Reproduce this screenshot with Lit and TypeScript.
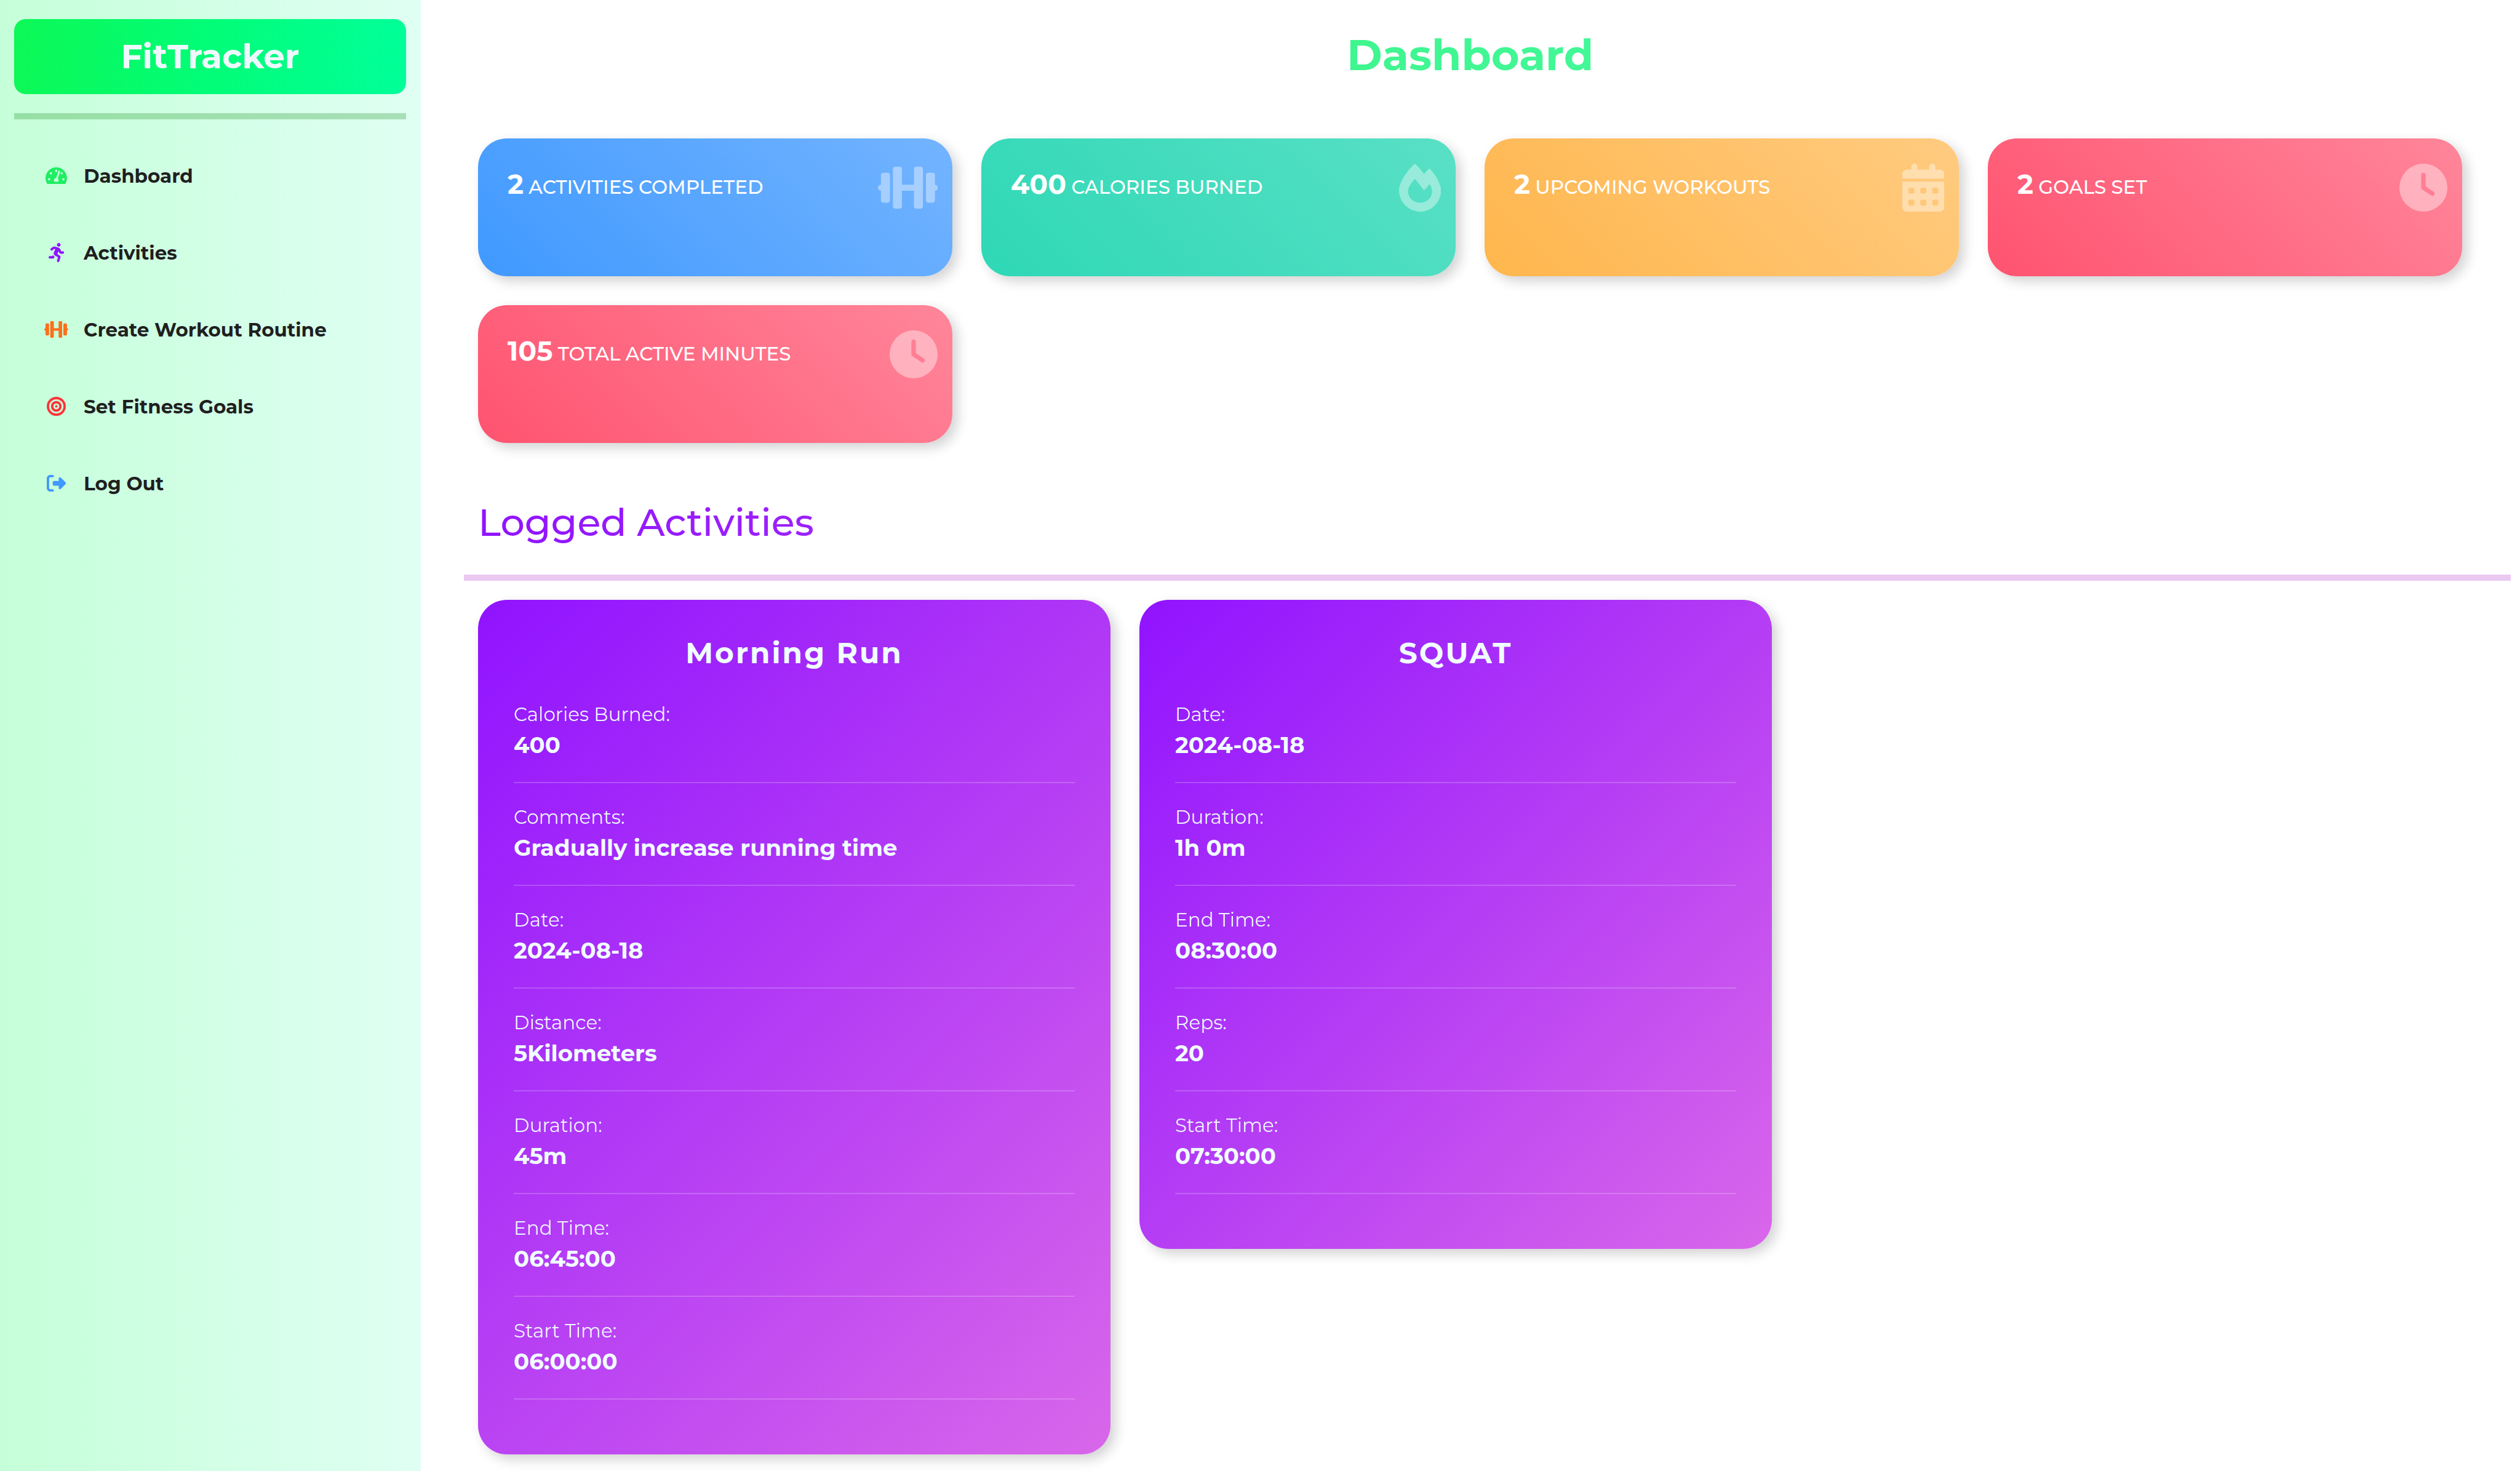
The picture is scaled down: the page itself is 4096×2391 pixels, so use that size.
import { LitElement, html, css, svg } from "lit";
import { customElement, property } from "lit/decorators.js";

interface IconShape {
  width: number;
  d: string;
}

const ICONS: Record<string, IconShape> = {
  gauge: {
    width: 576,
    d: "M288 32C128.94 32 0 160.94 0 320c0 52.8 14.25 102.26 39.06 144.8 5.61 9.62 16.3 15.2 27.44 15.2h443c11.14 0 21.83-5.58 27.44-15.2C561.75 422.26 576 372.8 576 320c0-159.06-128.94-288-288-288zm0 64c14.71 0 26.58 10.13 30.32 23.65-1.11 2.26-2.64 4.23-3.45 6.67l-9.22 27.67c-5.13 3.49-10.97 6.01-17.64 6.01-17.67 0-32-14.33-32-32S270.33 96 288 96zM96 384c-17.67 0-32-14.33-32-32s14.33-32 32-32 32 14.33 32 32-14.33 32-32 32zm48-160c-17.67 0-32-14.33-32-32s14.33-32 32-32 32 14.33 32 32-14.33 32-32 32zm246.77-72.41l-61.33 184C343.13 347.33 352 364.54 352 384c0 11.72-3.38 22.55-8.88 32H232.88c-5.5-9.45-8.88-20.28-8.88-32 0-33.94 26.5-61.43 59.9-63.59l61.34-184.01c4.17-12.56 17.73-19.45 30.36-15.17 12.57 4.19 19.35 17.79 15.17 30.36zm14.66 57.2l15.52-46.55c3.47-1.29 7.13-2.23 11.05-2.23 17.67 0 32 14.33 32 32s-14.33 32-32 32c-11.38-.01-20.89-6.28-26.57-15.22zM480 384c-17.67 0-32-14.33-32-32s14.33-32 32-32 32 14.33 32 32-14.33 32-32 32z",
  },
  running: {
    width: 416,
    d: "M272 96c26.51 0 48-21.49 48-48S298.51 0 272 0s-48 21.49-48 48 21.49 48 48 48zM113.69 317.47l-14.8 34.52H32c-17.67 0-32 14.33-32 32s14.33 32 32 32h77.45c19.25 0 36.58-11.44 44.11-29.09l8.79-20.52-10.67-6.3c-17.32-10.23-30.06-25.37-37.99-42.61zM384 223.99h-44.03l-26.06-53.25c-12.5-25.55-35.45-44.23-61.78-50.94l-71.08-21.14c-28.3-6.8-57.77-.55-80.84 17.14l-39.67 30.41c-14.03 10.75-16.69 30.83-5.94 44.86s30.84 16.69 44.86 5.94l39.69-30.41c7.67-5.89 17.44-8 25.27-6.14l14.7 4.37-37.46 87.39c-12.62 29.48-1.31 64.01 26.3 80.31l84.98 50.17-27.47 87.73c-5.28 16.86 4.11 34.82 20.97 40.09 3.19 1 6.41 1.48 9.58 1.48 13.61 0 26.23-8.77 30.52-22.45l31.64-101.06c5.91-20.77-2.89-43.08-21.64-54.39l-61.24-36.14 31.31-78.28 20.27 41.43c8 16.34 24.92 26.89 43.11 26.89H384c17.67 0 32-14.33 32-32s-14.33-31.99-32-31.99z",
  },
  dumbbell: {
    width: 640,
    d: "M104 96H56c-13.3 0-24 10.7-24 24v104c-17.7 0-32 14.3-32 32s14.3 32 32 32v104c0 13.3 10.7 24 24 24h48c13.3 0 24-10.7 24-24V120c0-13.3-10.7-24-24-24zm504 128V120c0-13.3-10.7-24-24-24h-48c-13.3 0-24 10.7-24 24v272c0 13.3 10.7 24 24 24h48c13.3 0 24-10.7 24-24V288c17.7 0 32-14.3 32-32s-14.3-32-32-32zM456 32h-48c-13.3 0-24 10.7-24 24v168H256V56c0-13.3-10.7-24-24-24h-48c-13.3 0-24 10.7-24 24v400c0 13.3 10.7 24 24 24h48c13.3 0 24-10.7 24-24V288h128v168c0 13.3 10.7 24 24 24h48c13.3 0 24-10.7 24-24V56c0-13.3-10.7-24-24-24z",
  },
  bullseye: {
    width: 512,
    d: "M448 256A192 192 0 1 0 64 256a192 192 0 1 0 384 0zM0 256a256 256 0 1 1 512 0A256 256 0 1 1 0 256zm256 80a80 80 0 1 0 0-160 80 80 0 1 0 0 160zm0-224a144 144 0 1 1 0 288 144 144 0 1 1 0-288zM224 256a32 32 0 1 1 64 0 32 32 0 1 1 -64 0z",
  },
  logout: {
    width: 512,
    d: "M377.9 105.9L500.7 228.7c7.2 7.2 11.3 17.1 11.3 27.3s-4.1 20.1-11.3 27.3L377.9 406.1c-6.4 6.4-15 9.9-24 9.9c-18.7 0-33.9-15.2-33.9-33.9l0-62.1-128 0c-17.7 0-32-14.3-32-32l0-64c0-17.7 14.3-32 32-32l128 0 0-62.1c0-18.7 15.2-33.9 33.9-33.9c9 0 17.6 3.6 24 9.9zM160 96L96 96c-17.7 0-32 14.3-32 32l0 256c0 17.7 14.3 32 32 32l64 0c17.7 0 32 14.3 32 32s-14.3 32-32 32l-64 0c-53 0-96-43-96-96L0 128C0 75 43 32 96 32l64 0c17.7 0 32 14.3 32 32s-14.3 32-32 32z",
  },
  flame: {
    width: 448,
    d: "M323.56 51.2c-20.8 19.3-39.58 39.59-56.22 59.97C240.08 73.62 206.28 35.53 168 0 69.74 91.17 0 209.96 0 281.6 0 408.85 100.29 512 224 512s224-103.15 224-230.4c0-53.27-51.98-163.14-124.44-230.4zm-19.47 340.65C282.43 407.01 255.72 416 226.86 416 154.71 416 96 368.26 96 290.75c0-38.61 24.31-72.63 72.79-130.75 6.93 7.98 98.83 125.34 98.83 125.34l58.63-66.88c4.14 6.85 7.91 13.55 11.27 19.97 27.35 52.19 15.81 118.97-33.43 153.42z",
  },
  calendar: {
    width: 448,
    d: "M128 0c17.7 0 32 14.3 32 32V64H288V32c0-17.7 14.3-32 32-32s32 14.3 32 32V64h48c26.5 0 48 21.5 48 48v48H0V112C0 85.5 21.5 64 48 64H96V32c0-17.7 14.3-32 32-32zM0 192H448V464c0 26.5-21.5 48-48 48H48c-26.5 0-48-21.5-48-48V192zm64 80v32c0 8.8 7.2 16 16 16h32c8.8 0 16-7.2 16-16V272c0-8.8-7.2-16-16-16H80c-8.8 0-16 7.2-16 16zm128 0v32c0 8.8 7.2 16 16 16h32c8.8 0 16-7.2 16-16V272c0-8.8-7.2-16-16-16H208c-8.8 0-16 7.2-16 16zm144-16c-8.8 0-16 7.2-16 16v32c0 8.8 7.2 16 16 16h32c8.8 0 16-7.2 16-16V272c0-8.8-7.2-16-16-16H336zM64 400v32c0 8.8 7.2 16 16 16h32c8.8 0 16-7.2 16-16V400c0-8.8-7.2-16-16-16H80c-8.8 0-16 7.2-16 16zm144-16c-8.8 0-16 7.2-16 16v32c0 8.8 7.2 16 16 16h32c8.8 0 16-7.2 16-16V400c0-8.8-7.2-16-16-16H208zm112 16v32c0 8.8 7.2 16 16 16h32c8.8 0 16-7.2 16-16V400c0-8.8-7.2-16-16-16H336c-8.8 0-16 7.2-16 16z",
  },
  clock: {
    width: 512,
    d: "M256 0a256 256 0 1 1 0 512A256 256 0 1 1 256 0zM232 120V256c0 8 4 15.5 10.7 20l96 64c11 7.4 25.9 4.4 33.3-6.7s4.4-25.9-6.7-33.3L280 243.2V120c0-13.3-10.7-24-24-24s-24 10.7-24 24z",
  },
};

const FONT = css`"Montserrat", "Inter", "Open Sans", sans-serif`;

const icon = (name: string) => {
  const shape = ICONS[name];
  return html`<svg class="icon" viewBox="0 0 ${shape.width} 512" aria-hidden="true">
    ${svg`<path fill="currentColor" d=${shape.d}></path>`}
  </svg>`;
};

interface NavItem {
  label: string;
  icon: string;
  href: string;
}

const NAV: NavItem[] = [
  { label: "Dashboard", icon: "gauge", href: "#dashboard" },
  { label: "Activities", icon: "running", href: "#activities" },
  { label: "Create Workout Routine", icon: "dumbbell", href: "#routine" },
  { label: "Set Fitness Goals", icon: "bullseye", href: "#goals" },
  { label: "Log Out", icon: "logout", href: "#logout" },
];

interface Stat {
  value: string;
  label: string;
  icon: string;
  tone: string;
}

const STATS: Stat[] = [
  { value: "2", label: "ACTIVITIES COMPLETED", icon: "dumbbell", tone: "blue" },
  { value: "400", label: "CALORIES BURNED", icon: "flame", tone: "teal" },
  { value: "2", label: "UPCOMING WORKOUTS", icon: "calendar", tone: "amber" },
  { value: "2", label: "GOALS SET", icon: "clock", tone: "rose" },
  { value: "105", label: "TOTAL ACTIVE MINUTES", icon: "clock", tone: "rose" },
];

interface Activity {
  title: string;
  fields: [string, string][];
}

const ACTIVITIES: Activity[] = [
  {
    title: "Morning Run",
    fields: [
      ["Calories Burned:", "400"],
      ["Comments:", "Gradually increase running time"],
      ["Date:", "2024-08-18"],
      ["Distance:", "5Kilometers"],
      ["Duration:", "45m"],
      ["End Time:", "06:45:00"],
      ["Start Time:", "06:00:00"],
    ],
  },
  {
    title: "SQUAT",
    fields: [
      ["Date:", "2024-08-18"],
      ["Duration:", "1h 0m"],
      ["End Time:", "08:30:00"],
      ["Reps:", "20"],
      ["Start Time:", "07:30:00"],
    ],
  },
];

@customElement("side-bar")
export class SideBar extends LitElement {
  static styles = css`
    :host {
      display: block;
      box-sizing: border-box;
      padding: 31px 24px 31px 23px;
      background: linear-gradient(90deg, #c5ffd9, #dffff3);
    }
    .brand {
      display: block;
      padding: 27px 0;
      border-radius: 19px;
      background: linear-gradient(90deg, #0cf856, #02fd78 50%, #00ff99);
      color: #f0f8ff;
      font: 700 55px/68px ${FONT};
      text-align: center;
      text-decoration: none;
    }
    .rule {
      height: 10px;
      margin: 31px 0 29px;
      border: 0;
      background: linear-gradient(90deg, #96dfa4, #a7dfb6);
    }
    .links {
      margin: 0;
      padding: 0 49px;
      list-style: none;
    }
    .link {
      display: flex;
      align-items: center;
      gap: 25px;
      height: 125px;
      color: #1f1f1f;
      font: 700 31px/38px ${FONT};
      text-decoration: none;
    }
    .glyph {
      display: flex;
      flex: none;
      justify-content: center;
      width: 39px;
    }
    .icon {
      height: 31px;
    }
    .gauge {
      color: #1eee62;
    }
    .running {
      color: #9013ff;
    }
    .dumbbell {
      color: #ff6f1a;
    }
    .bullseye {
      color: #ff3338;
    }
    .logout {
      color: #4099ff;
    }
  `;

  render() {
    return html`
      <a class="brand" href="#home">FitTracker</a>
      <hr class="rule" />
      <nav aria-label="Main">
        <ul class="links">
          ${NAV.map(
            (item) => html`<li>
              <a class="link" href=${item.href}>
                <span class="glyph ${item.icon}">${icon(item.icon)}</span>
                <span>${item.label}</span>
              </a>
            </li>`
          )}
        </ul>
      </nav>
    `;
  }
}

@customElement("stat-card")
export class StatCard extends LitElement {
  @property({ attribute: false }) stat!: Stat;

  static styles = css`
    :host {
      display: block;
    }
    .card {
      display: flex;
      justify-content: space-between;
      align-items: flex-start;
      box-sizing: border-box;
      min-height: 224px;
      padding: 41px 24px 41px 48px;
      border-radius: 47px;
      box-shadow: 8px 8px 20px rgba(0, 0, 0, 0.18);
      color: #ffffff;
    }
    .blue {
      background: linear-gradient(45deg, #4099ff, #73b4ff);
    }
    .teal {
      background: linear-gradient(45deg, #2ed8b6, #59e0c5);
    }
    .amber {
      background: linear-gradient(45deg, #ffb64d, #ffcb80);
    }
    .rose {
      background: linear-gradient(45deg, #ff5370, #ff869a);
    }
    .text {
      margin: 6px 0 0;
      font: 500 31px/54px ${FONT};
    }
    .value {
      font-size: 44px;
      font-weight: 700;
    }
    .icon {
      flex: none;
      height: 78px;
      opacity: 0.4;
    }
  `;

  render() {
    const { value, label, icon: name, tone } = this.stat;
    return html`<div class="card ${tone}">
      <p class="text"><span class="value">${value}</span> ${label}</p>
      ${icon(name)}
    </div>`;
  }
}

@customElement("activity-card")
export class ActivityCard extends LitElement {
  @property({ attribute: false }) activity!: Activity;

  static styles = css`
    :host {
      display: block;
    }
    .card {
      padding: 59px 58px 89px;
      border-radius: 47px;
      background: linear-gradient(135deg, #9013ff, #d967ea);
      box-shadow: 8px 8px 20px rgba(0, 0, 0, 0.18);
      color: #f0ffff;
    }
    .title {
      margin: 0 0 16px;
      font: 700 47px/56px ${FONT};
      letter-spacing: 3px;
      text-align: center;
    }
    .fields {
      margin: 0;
    }
    .field {
      padding: 30px 0 35px;
      border-bottom: 2px solid rgba(255, 255, 255, 0.2);
    }
    .name {
      font: 400 31px/50px ${FONT};
      opacity: 0.95;
    }
    .data {
      margin: 0;
      font: 700 37px/50px ${FONT};
    }
  `;

  render() {
    return html`<article class="card">
      <h3 class="title">${this.activity.title}</h3>
      <dl class="fields">
        ${this.activity.fields.map(
          ([name, data]) => html`<div class="field">
            <dt class="name">${name}</dt>
            <dd class="data">${data}</dd>
          </div>`
        )}
      </dl>
    </article>`;
  }
}

@customElement("app-root")
export class AppRoot extends LitElement {
  static styles = css`
    :host {
      display: grid;
      grid-template-columns: 16.7% minmax(0, 1fr);
      min-height: 100vh;
      background: #ffffff;
    }
    .main {
      padding: 46px 15px 24px 70px;
    }
    .section {
      padding: 0 79px 0 23px;
    }
    .heading {
      margin: 0 0 93px;
      font: 700 70px/86px ${FONT};
      text-align: center;
      background: linear-gradient(90deg, #34ee72, #4dffb4);
      background-clip: text;
      -webkit-background-clip: text;
      color: transparent;
    }
    .stats {
      display: grid;
      grid-template-columns: repeat(4, minmax(0, 1fr));
      gap: 47px;
    }
    .subheading {
      margin: 92px 0 48px;
      font: 500 62px/74px ${FONT};
      background: linear-gradient(90deg, #9013ff, #d967ea);
      background-clip: text;
      -webkit-background-clip: text;
      color: transparent;
    }
    .rule {
      height: 10px;
      margin: 0 0 31px;
      border: 0;
      background: #ebc8f2;
    }
    .activities {
      display: grid;
      grid-template-columns: repeat(3, minmax(0, 1fr));
      align-items: start;
      gap: 47px;
      padding: 0 126px 0 23px;
    }
  `;

  render() {
    return html`
      <side-bar></side-bar>
      <main class="main">
        <div class="section">
          <h1 class="heading">Dashboard</h1>
          <div class="stats">
            ${STATS.map((stat) => html`<stat-card .stat=${stat}></stat-card>`)}
          </div>
          <h2 class="subheading">Logged Activities</h2>
        </div>
        <hr class="rule" />
        <div class="activities">
          ${ACTIVITIES.map(
            (activity) => html`<activity-card .activity=${activity}></activity-card>`
          )}
        </div>
      </main>
    `;
  }
}
